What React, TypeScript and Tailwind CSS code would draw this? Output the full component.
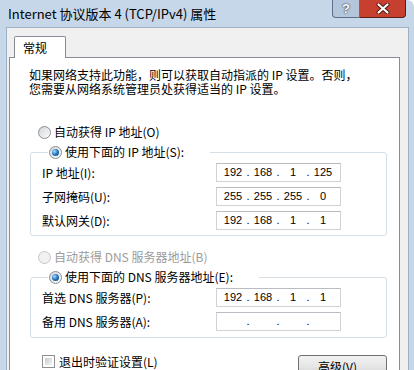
import React from 'react';

const CJK = "font-['Noto_Sans_CJK_SC',sans-serif]";

function Radio({ checked, disabled }: { checked?: boolean; disabled?: boolean }) {
  return (
    <div
      className={`w-[13px] h-[13px] shrink-0 rounded-full border flex items-center justify-center ${
        disabled
          ? 'border-[#c4c6c9] bg-[#f1f1f1]'
          : 'border-[#8b8f95] bg-[#e8e8e8] bg-linear-to-br from-[#d4d6d9] to-[#fbfbfb]'
      }`}
    >
      {checked && (
        <div className="w-[7px] h-[7px] rounded-full bg-[radial-gradient(circle_at_35%_35%,#a6e0ff,#2a7cc4_45%,#0b3a6e)]" />
      )}
    </div>
  );
}

function IpInput({ value }: { value?: string[] }) {
  const parts = value ?? ['', '', '', ''];
  return (
    <div className="w-[125px] h-[19px] bg-white border border-[#cfd3d8] border-t-[#b9bdc3] flex items-center pl-[4px] text-[11px] leading-none text-black font-['Liberation_Sans',sans-serif]">
      {parts.map((p, i) => (
        <React.Fragment key={i}>
          {i > 0 && <span className="w-[6px] text-center">.</span>}
          <span className="w-[24px] text-center">{p}</span>
        </React.Fragment>
      ))}
    </div>
  );
}

function FieldRow({ label, value }: { label: string; value?: string[] }) {
  return (
    <div className="h-[19px] flex items-center">
      <span className="w-[174px] text-[12px] leading-none">{label}</span>
      <IpInput value={value} />
    </div>
  );
}

function Group({ legend, children, pb }: { legend: string; children: React.ReactNode; pb: string }) {
  return (
    <fieldset className={`ml-[20px] mr-[12px] border border-[#d5dfe5] rounded-[3px] pl-[11px] ${pb}`}>
      <legend className="ml-[6px] pl-[1px] pr-[26px] h-[16px]">
        <div className="flex items-center gap-[3px] h-[16px] text-[12px] leading-none">
          <Radio checked />
          <span>{legend}</span>
        </div>
      </legend>
      <div className="pt-[3px] flex flex-col gap-[5px]">{children}</div>
    </fieldset>
  );
}

export default function App() {
  return (
    <div className={`w-[414px] h-[370px] overflow-hidden bg-white ${CJK}`}>
      <div className="h-full rounded-tr-[7px] bg-[#c6d7ea] flex flex-col">
        {/* Title bar */}
        <div className="h-[27px] shrink-0 flex items-start justify-between">
          <span className="pl-[8px] pt-[5px] text-[13px] leading-[18px] text-black">
            Internet 协议版本 4 (TCP/IPv4) 属性
          </span>
          <div className="flex mr-[8px]">
            <div className="w-[28px] h-[18px] rounded-bl-[4px] border border-t-0 border-[#5f6f86] bg-[#b4c6dc] flex items-center justify-center">
              <span className="text-[13px] font-bold leading-none text-white [text-shadow:0_0_2px_#2b3a50,0_0_1px_#2b3a50] font-['Liberation_Sans',sans-serif]">
                ?
              </span>
            </div>
            <div className="w-[46px] h-[18px] rounded-br-[4px] border border-t-0 border-l-0 border-[#5a1d16] bg-[#c7402f] flex items-center justify-center">
              <svg width="14" height="11" viewBox="0 0 14 11">
                <path d="M2.5 1.5 L11.5 9.5 M11.5 1.5 L2.5 9.5" stroke="#4a1812" strokeWidth="4" strokeLinecap="round" />
                <path d="M2.5 1.5 L11.5 9.5 M11.5 1.5 L2.5 9.5" stroke="#ffffff" strokeWidth="2.2" strokeLinecap="round" />
              </svg>
            </div>
          </div>
        </div>

        {/* Dialog body */}
        <div className="flex-1 ml-[6px] mr-[5px] border border-b-0 border-[#9fb0c4] bg-[#f0f0f0] pt-[8px] pl-[2px] pr-[8px] flex flex-col">
          <div className="ml-[5px] w-[52px] h-[22px] -mb-px relative z-10 bg-white border border-b-0 border-[#898c95] rounded-t-[2px] flex items-center pl-[8px] text-[12px] leading-none">
            常规
          </div>
          <div className="flex-1 bg-white border border-[#898c95] text-black">
            <div className="pt-[10px] pl-[19px] text-[12px] leading-[14px]">
              <div>如果网络支持此功能，则可以获取自动指派的 IP 设置。否则，</div>
              <div>您需要从网络系统管理员处获得适当的 IP 设置。</div>
            </div>

            <div className="mt-[28px] pl-[28px] h-[16px] flex items-center gap-[3px] text-[12px] leading-none">
              <Radio />
              <span>自动获得 IP 地址(O)</span>
            </div>

            <div className="mt-[4px]">
              <Group legend="使用下面的 IP 地址(S):" pb="pb-[5px]">
                <FieldRow label="IP 地址(I):" value={['192', '168', '1', '125']} />
                <FieldRow label="子网掩码(U):" value={['255', '255', '255', '0']} />
                <FieldRow label="默认网关(D):" value={['192', '168', '1', '1']} />
              </Group>
            </div>

            <div className="mt-[13px] pl-[28px] h-[16px] flex items-center gap-[3px] text-[12px] leading-none text-[#9b9b9b]">
              <Radio disabled />
              <span>自动获得 DNS 服务器地址(B)</span>
            </div>

            <div className="mt-[4px]">
              <Group legend="使用下面的 DNS 服务器地址(E):" pb="pb-[6px]">
                <FieldRow label="首选 DNS 服务器(P):" value={['192', '168', '1', '1']} />
                <FieldRow label="备用 DNS 服务器(A):" />
              </Group>
            </div>

            <div className="mt-[17px] pl-[32px] pr-[12px] flex items-start justify-between">
              <div className="h-[13px] flex items-center gap-[4px] text-[12px] leading-none">
                <div className="w-[13px] h-[13px] border border-[#8e8f8f] bg-white p-[2px]">
                  <div className="w-full h-full bg-[#e0e0e0] bg-linear-to-br from-[#c9cdd3] to-[#f4f4f4]" />
                </div>
                <span>退出时验证设置(L)</span>
              </div>
              <div className="w-[89px] h-[23px] rounded-[3px] border border-[#707070] bg-[#e6e6e6] bg-linear-to-b from-[#f2f2f2] via-[#e6e6e6] to-[#cfcfcf] flex items-start justify-center pt-[5px] text-[12px] leading-none">
                高级(V)...
              </div>
            </div>
          </div>
        </div>
      </div>
    </div>
  );
}
